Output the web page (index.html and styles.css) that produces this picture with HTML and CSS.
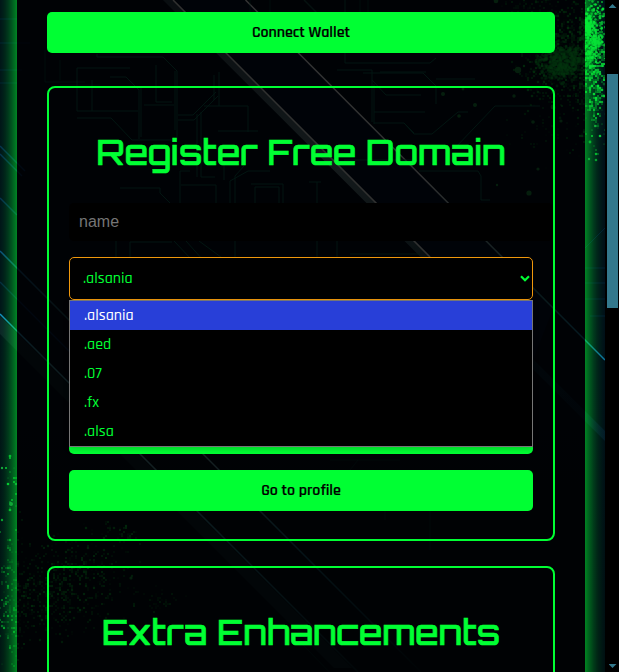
FILE: index.html
```html
<!DOCTYPE html>
<html lang="en">
<head>
<meta charset="utf-8">
<title>Register Free Domain</title>
<link rel="stylesheet" href="styles.css">
</head>
<body>
<div class="window">
  <div class="page">
    <svg class="backdrop" viewBox="0 0 605 672" aria-hidden="true">
      <defs>
        <linearGradient id="sky" x1="0" y1="0" x2="0" y2="1">
          <stop offset="0" stop-color="#010a17"/><stop offset=".45" stop-color="#000a18"/><stop offset="1" stop-color="#010b12"/>
        </linearGradient>
        <linearGradient id="beam" gradientUnits="userSpaceOnUse" x1="160" y1="0" x2="605" y2="430">
          <stop offset="0" stop-color="#39505c"/><stop offset=".4" stop-color="#7b9a9e"/><stop offset=".55" stop-color="#4d7378"/><stop offset=".7" stop-color="#08303c"/><stop offset="1" stop-color="#061a30"/>
        </linearGradient>
        <linearGradient id="ray" gradientUnits="userSpaceOnUse" x1="240" y1="0" x2="605" y2="360">
          <stop offset="0" stop-color="#e0e0e0"/><stop offset=".5" stop-color="#d0d4d4"/><stop offset=".8" stop-color="#2d6e70"/><stop offset="1" stop-color="#0d70a0"/>
        </linearGradient>
        <linearGradient id="low" gradientUnits="userSpaceOnUse" x1="0" y1="310" x2="400" y2="672">
          <stop offset="0" stop-color="#128fd0"/><stop offset=".1" stop-color="#2f7484"/><stop offset=".35" stop-color="#5b9098"/><stop offset=".6" stop-color="#236978"/><stop offset="1" stop-color="#02131a"/>
        </linearGradient>
        <linearGradient id="mid" gradientUnits="userSpaceOnUse" x1="0" y1="250" x2="420" y2="672">
          <stop offset="0" stop-color="#0b4a80"/><stop offset=".15" stop-color="#1d4c56"/><stop offset=".5" stop-color="#5b8a90"/><stop offset=".7" stop-color="#17596c"/><stop offset="1" stop-color="#02131a"/>
        </linearGradient>
      </defs>
      <rect width="605" height="672" fill="url(#sky)"/>
      <path d="M175 0H245L502 257L553 309L533 360L430 257Z" fill="#03102e" opacity=".6"/>
      <path d="M163 0H174L605 431V441Z" fill="url(#beam)" opacity=".7"/>
      <g fill="none" stroke-width="1.5">
        <path d="M173 0L430 257" stroke="#d4d4d0"/>
        <path d="M245.500 0L605 360" stroke="url(#ray)"/>
        <path d="M0 314L358 672" stroke="url(#low)"/>
        <path d="M0 251L421 672" stroke="url(#mid)"/>
        <path d="M0 282L100 382" stroke="#08325c" opacity=".6"/>
        <path d="M0 198L17 215M0 154L22 176M0 146L25 171" stroke="#0b3d74" opacity=".6"/>
        <path d="M304 0L325 21" stroke="#174942"/>
      </g>
      <path d="M0 316L352 668L334 668L0 334Z" fill="#2c4850" opacity=".28"/>
      <g class="circuits">
        <path d="M97 54V57H163L177 71V140H132L111 118H77"/>
        <path d="M77 68H130M77 68V111H138M110 77H126L139 90V139M141 88V137M92 80V111"/>
        <path d="M156 65V102H172M175 71V130M144 105H174M178 115H193L216 92M178 120H194L218 96"/>
        <path d="M197 114V177M201 112V177H215M204 106H248V132M218 131H258M219 72V106M214 75V100"/>
        <path d="M120 188H160V193L171 204M190 171L180 171V203M216 203V185H181M224 160V180"/>
        <path d="M230 203V181L248 171H270M255 203V187H279V203M251 184H283V203M235 203V176L244 166"/>
        <path d="M116 241V260M130 260V242H172M174 241L192 260M186 241L203 260M199 241L225 260M235 241V259"/>
        <path d="M345 0V63H430L436 58M337 70H372V122M372 80L386 95H421M363 73H423L436 86V104M436 79H475M374 84V124"/>
        <path d="M380 72H426M374 112H425M374 123H404L414 133M404 123L414 134H432L458 112H468M455 148L495 106H540"/>
        <path d="M309 182H321M317 182V205M344 160H417M419 171H478L481 176V200H490M317 241V257M337 241V257M350 254H420"/>
        <path d="M250 40V0M270 0V20H320M360 0V18M368 0V25" opacity=".5"/>
        <path d="M60 85H100M45 50V82H85M60 60V80" opacity=".5"/>
        <path d="M340 490H385V520M430 511V550M330 460H400M350 470L358 460M300 642L345 688" opacity=".3"/>
      </g>
      <g class="side-lines">
        <path d="M0 19H17M0 43H30M0 70H22M0 83H17M585 268H605M585 283H605M585 299H605M590 316H605M585 248L605 228"/>
      </g>
      <g id="spray"></g>
    </svg>

    <main class="container">
      <button class="btn">Connect Wallet</button>

      <section class="card">
        <h2 class="title">Register Free Domain</h2>
        <input class="name" type="text" placeholder="name">
        <div class="dropdown">
          <div class="select"><span>.alsania</span>
            <svg class="chevron" viewBox="0 0 10 7"><path d="M1 1.200L5 5.200L9 1.200"/></svg>
          </div>
          <ul class="options">
            <li class="active">.alsania</li>
            <li>.aed</li>
            <li>.07</li>
            <li>.fx</li>
            <li>.alsa</li>
          </ul>
        </div>
        <button class="btn" aria-label="Register"></button>
        <button class="btn btn-profile">Go to profile</button>
      </section>

      <section class="card">
        <h2 class="title">Extra Enhancements</h2>
      </section>
    </main>
  </div>

  <div class="scrollbar">
    <i class="arrow arrow-up"></i>
    <i class="thumb"></i>
    <i class="arrow arrow-down"></i>
  </div>
</div>
<script src="spray.js"></script>
</body>
</html>
```
FILE: styles.css
```css
* { box-sizing: border-box; }

body {
  margin: 0;
  height: 672px;
  overflow: hidden;
  background: #000;
  color: #00ff33;
  font-family: Rajdhani, Roboto, sans-serif;
}

.window { display: flex; height: 672px; overflow: hidden; }

.page {
  position: relative;
  width: 605px;
  height: 672px;
  padding: 0 20px 0 17px;
  overflow: hidden;
}

.backdrop { position: absolute; inset: 0; width: 605px; height: 672px; }
.circuits { fill: none; stroke: #0a5c4b; stroke-width: 1; }
.side-lines { fill: none; stroke: #07336a; stroke-width: 1; opacity: .35; }

.container {
  position: relative;
  height: 900px;
  margin-top: -100px;
  padding: 112px 30px 0;
  background: rgba(0, 0, 0, .77);
  box-shadow: 0 0 20px #00ff33;
}

.btn {
  display: block;
  width: 100%;
  height: 41px;
  padding: 0;
  border: 0;
  border-radius: 5px;
  background: #00ff33;
  color: #000;
  font: 600 16px/41px Rajdhani, Roboto, sans-serif;
  letter-spacing: -.06px;
  text-align: center;
  -webkit-text-stroke: .2px #000;
}

.card {
  height: 455px;
  margin-top: 33px;
  padding: 0 20px;
  border: 2px solid #00ff33;
  border-radius: 8px;
}
.card + .card { margin-top: 25px; }

.title {
  height: 115px;
  margin: 0;
  padding-top: 41px;
  font: 500 34px/46px Orbitron, "DejaVu Sans", sans-serif;
  text-align: center;
  white-space: nowrap;
  -webkit-text-stroke: .6px #00ff33;
}

.name {
  display: block;
  box-sizing: content-box;
  width: 100%;
  height: 18px;
  padding: 10px;
  border: 0;
  border-radius: 5px;
  background: #000;
  font: 16px/18px "Liberation Sans", sans-serif;
}
.name::placeholder { color: #757575; }

.dropdown { position: relative; height: 172px; padding-top: 16px; }

.select {
  display: flex;
  align-items: center;
  justify-content: space-between;
  height: 43px;
  padding: 0 2px 0 13px;
  border: 1px solid #f0980c;
  border-radius: 5px;
  background: #000;
  font-size: 16px;
  font-weight: 500;
}
.chevron { width: 10px; height: 7px; fill: none; stroke: #00ff33; stroke-width: 2.200; }

.options {
  position: absolute;
  top: 59px;
  left: 0;
  z-index: 2;
  width: 100%;
  margin: 0;
  padding: 0;
  border: 1px solid #767676;
  background: #000;
  box-shadow: 0 2px 6px rgba(0, 0, 0, .2);
  list-style: none;
  font-size: 16px;
  font-weight: 500;
  line-height: 29px;
}
.options li { height: 29px; padding-left: 14px; }
.options .active { background: #283fd8; color: #fff; }

.btn-profile { margin-top: 16px; }

.scrollbar {
  display: flex;
  flex-direction: column;
  align-items: center;
  width: 14px;
  height: 672px;
  padding: 4px 0 4px 1px;
  background: #000;
}
.thumb { width: 11px; height: 234px; margin-top: 66px; background: #33788c; }
.arrow { width: 8px; height: 4px; background: #33788c; }
.arrow-up { clip-path: polygon(50% 0, 100% 100%, 0 100%); }
.arrow-down { margin-top: auto; clip-path: polygon(0 0, 100% 0, 50% 100%); }
```
FILE: spray.js
```js
// Paint spatter: seeded clusters of dots snapped to a halftone grid.
let seed = 7;
const rnd = () => (seed = (seed * 16807) % 2147483647) / 2147483647;
const gauss = () => (rnd() + rnd() + rnd() - 1.5) / 1.5;

// [centre x, centre y, spread x, spread y, count, max radius, opacity, grid]
const clusters = [
  [570, 50, 65, 75, 900, 1.4, 0.7, 2],
  [562, 62, 36, 28, 600, 2.2, 0.5, 1],
  [592, 38, 16, 48, 320, 1.5, 0.95, 1.5],
  [597, 60, 16, 110, 300, 1.4, 0.95, 2],
  [588, 27, 5, 17, 150, 1.6, 0.9, 1],
  [597, 42, 9, 9, 100, 1.5, 0.8, 1],
  [590, 95, 20, 65, 130, 1.3, 0.8, 2],
  [530, 15, 50, 45, 180, 1.2, 0.5, 2],
  [550, 105, 50, 80, 110, 1.3, 0.5, 3],
  [12, 600, 30, 100, 180, 1.2, 0.6, 2],
  [50, 595, 65, 65, 380, 1.3, 0.65, 2],
  [85, 575, 70, 60, 240, 1.3, 0.65, 2],
  [8, 480, 22, 60, 22, 1.4, 0.9, 2],
  [120, 535, 35, 15, 40, 1.3, 0.8, 2],
  [160, 600, 30, 20, 40, 1.1, 0.5, 2]
];
const blobs = [
  [496, 1, 2.3], [518, 70, 3.2], [443, 94, 2], [475, 105, 2], [529, 193, 2.6],
  [459, 116, 1.8], [533, 122, 1.8], [553, 107, 2.4], [538, 169, 1.6],
  [514, 96, 1.7], [463, 89, 1.4], [497, 185, 1.2], [561, 121, 1.6], [131, 578, 1.6],
  [11, 504, 2], [16, 484, 1.3], [2, 468, 1.2], [589, 159, 1.2], [595, 126, 1.2]
];

let dots = "";
for (const [cx, cy, sx, sy, n, r, o, g] of clusters) {
  for (let i = 0; i < n; i++) {
    const x = Math.round((cx + gauss() * sx) / g) * g;
    const y = Math.round((cy + gauss() * sy) / g) * g;
    dots += `<circle cx="${x}" cy="${y}" r="${(0.4 + rnd() * (r - 0.4)).toFixed(2)}" fill="#0bdc3a" opacity="${(o * (0.4 + rnd() * 0.6)).toFixed(2)}"/>`;
  }
}
for (const [x, y, r] of blobs) {
  dots += `<circle cx="${x}" cy="${y}" r="${r}" fill="#1fae45" opacity=".75"/>`;
}
document.getElementById("spray").innerHTML = dots;
```
